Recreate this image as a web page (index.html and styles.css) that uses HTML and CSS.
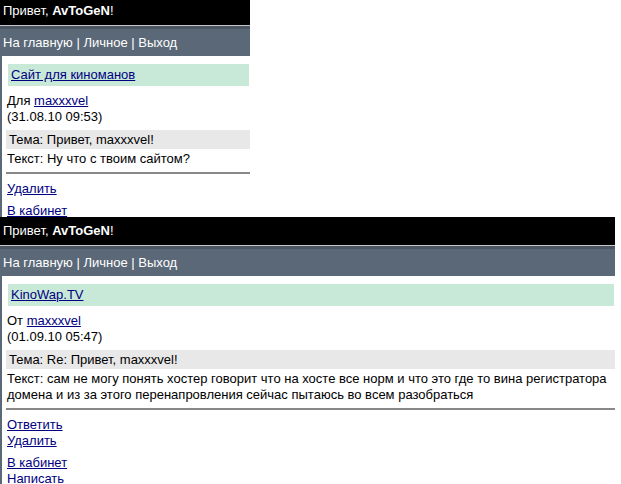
FILE: index.html
```html
<!DOCTYPE html>
<html lang="ru">
<head>
    <meta charset="UTF-8">
    <title>Почта</title>
    <link rel="stylesheet" href="styles.css">
</head>
<body>
    <div class="shot shot-small">
        <div class="page page-cut">
            <div class="top">Привет, <b>AvToGeN</b>!</div>
            <div class="menu"><a href="#">На главную</a> | <a href="#">Личное</a> | <a href="#">Выход</a></div>
            <div class="main">
                <div class="site"><a href="#">Сайт для киноманов</a></div>
                <div class="info">Для <a href="#">maxxxvel</a><br>(31.08.10 09:53)</div>
                <div class="subj">Тема: Привет, maxxxvel!</div>
                <div class="msg">Текст: Ну что с твоим сайтом?</div>
                <hr>
                <div class="links"><a href="#">Удалить</a></div>
                <div class="links"><a href="#">В кабинет</a><br><a href="#">Написать</a></div>
            </div>
        </div>
    </div>
    <div class="shot shot-big">
        <div class="page">
            <div class="top">Привет, <b>AvToGeN</b>!</div>
            <div class="menu"><a href="#">На главную</a> | <a href="#">Личное</a> | <a href="#">Выход</a></div>
            <div class="main">
                <div class="site"><a href="#">KinoWap.TV</a></div>
                <div class="info">От <a href="#">maxxxvel</a><br>(01.09.10 05:47)</div>
                <div class="subj">Тема: Re: Привет, maxxxvel!</div>
                <div class="msg">Текст: сам не могу понять хостер говорит что на хосте все норм и что это где то вина регистратора домена и из за этого перенапровления сейчас пытаюсь во всем разобраться</div>
                <hr>
                <div class="links"><a href="#">Ответить</a><br><a href="#">Удалить</a></div>
                <div class="links"><a href="#">В кабинет</a><br><a href="#">Написать</a></div>
            </div>
        </div>
    </div>
</body>
</html>
```

FILE: styles.css
```css
body {
    margin: 0;
    background-color: #fff;
    font-family: 'Liberation Sans', Arial, sans-serif;
    font-size: 13px;
    color: #000;
}
a {
    color: #000080;
}
.shot {
    overflow: hidden;
    background-color: #fff;
}
.shot-small {
    width: 250px;
    height: 217px;
}
.shot-big {
    width: 615px;
    height: 267px;
}
.page-cut {
    margin-top: -3px;
}
.top {
    background-color: #000;
    color: #fff;
    height: 28px;
    line-height: 28px;
    padding-left: 3px;
    border-bottom: 1px solid #c4c8cc;
}
.menu {
    background-color: #5a6877;
    border-top: 3px solid #4b5662;
    color: #fff;
    height: 27px;
    line-height: 27px;
    padding-left: 3px;
}
.menu a {
    color: #fff;
    text-decoration: none;
}
.main {
    border-left: 2px solid #5a6877;
    padding: 8px 0 20px 5px;
}
.site {
    background-color: #c8e8d8;
    margin-left: 1px;
    margin-right: 1px;
    padding-left: 3px;
    height: 22px;
    line-height: 22px;
}
.info {
    margin-top: 7px;
    line-height: 16px;
}
.subj {
    background-color: #e8e8e8;
    margin: 5px 0 0 -1px;
    padding-left: 3px;
    height: 19px;
    line-height: 19px;
}
.msg {
    margin-top: 2px;
    line-height: 16px;
}
hr {
    border: none;
    border-top: 2px solid #888;
    margin: 5px 0 7px -1px;
}
.links {
    line-height: 16px;
    margin-bottom: 6px;
}
```
